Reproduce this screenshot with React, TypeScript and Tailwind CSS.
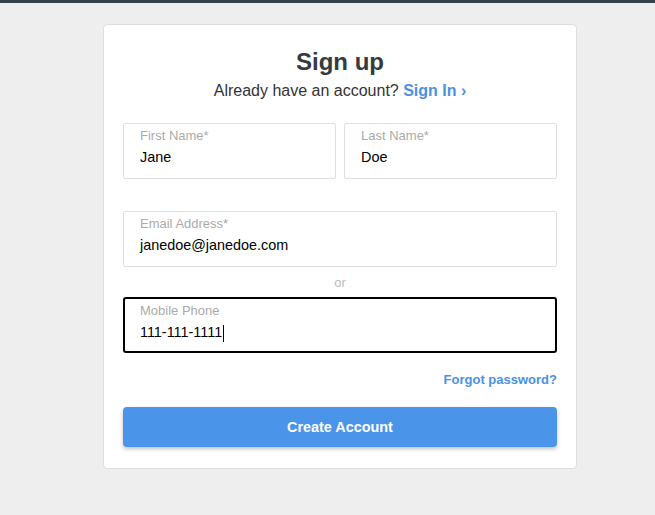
import React, { useState } from "react";

interface FieldProps {
    label: string;
    value: string;
    focused?: boolean;
    className?: string;
}

function Field({ label, value, focused, className }: FieldProps) {
    return (
        <div
            className={
                "h-[56px] bg-white px-4 pt-[4px] " +
                (focused
                    ? "border-2 border-black rounded-[3px] px-[15px] pt-[3px]"
                    : "border border-[#dddddd] rounded-[2px]") +
                (className ? " " + className : "")
            }
        >
            <div className="text-[13px] leading-[15px] text-[#aaaaaa]">{label}</div>
            <div className="mt-[3px] h-6 flex items-center text-[14.4px] text-black">
                {value}
                {focused && <span className="inline-block w-px h-[17px] bg-black ml-px" />}
            </div>
        </div>
    );
}

export default function App() {
    const [first] = useState("Jane");
    const [last] = useState("Doe");

    return (
        <div className="min-h-[515px] bg-[#eeeeee]" style={{ fontFamily: '"Liberation Sans", Arial, sans-serif' }}>
            <div className="h-[3px] bg-[#37414a]" />
            <div className="pl-[103px] pt-[21px]">
                <div className="w-[474px] bg-white border border-[#dddddd] rounded-[4px] px-[19px] pt-[21px] pb-[21px]">
                    <h1 className="text-center text-2xl leading-8 font-bold text-[#343a40]">Sign up</h1>
                    <p className="mt-px text-center text-base leading-6 text-[#333333]">
                        Already have an account?{" "}
                        <a className="font-bold text-[#4a90e2]">Sign In ›</a>
                    </p>

                    <div className="mt-[20px] flex gap-2">
                        <Field label="First Name*" value={first} className="flex-1" />
                        <Field label="Last Name*" value={last} className="flex-1" />
                    </div>

                    <Field label="Email Address*" value="janedoe@janedoe.com" className="mt-8" />

                    <div className="mt-[6px] text-center text-[13px] leading-5 text-[#bbbbbb]">or</div>

                    <Field label="Mobile Phone" value="111-111-1111" focused className="mt-[4px]" />

                    <div className="mt-[19px] flex justify-end">
                        <a className="text-[13px] leading-4 font-bold text-[#4a90e2]">Forgot password?</a>
                    </div>

                    <button className="mt-[19px] w-full h-10 pt-px rounded-[4px] bg-[#4a94ea] text-white text-[14.4px] font-bold shadow-[0_2px_4px_rgba(0,0,0,0.25)]">
                        Create Account
                    </button>
                </div>
            </div>
        </div>
    );
}
